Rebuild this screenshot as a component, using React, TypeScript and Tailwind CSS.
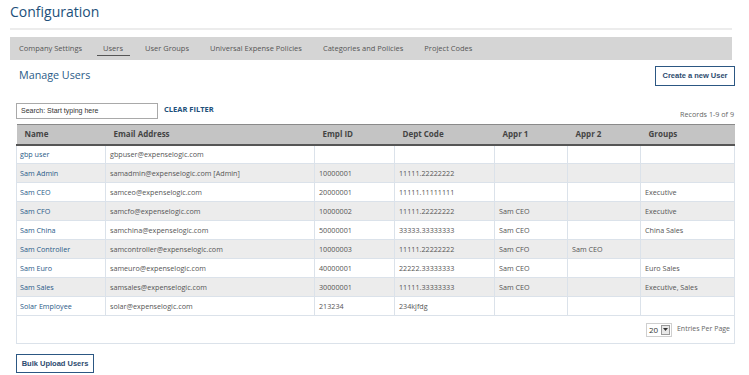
import React from "react";

const rows = [
  ["gbp user", "gbpuser@expenselogic.com", "", "", "", "", ""],
  ["Sam Admin", "samadmin@expenselogic.com [Admin]", "10000001", "11111.22222222", "", "", ""],
  ["Sam CEO", "samceo@expenselogic.com", "20000001", "11111.11111111", "", "", "Executive"],
  ["Sam CFO", "samcfo@expenselogic.com", "10000002", "11111.22222222", "Sam CEO", "", "Executive"],
  ["Sam China", "samchina@expenselogic.com", "50000001", "33333.33333333", "Sam CEO", "", "China Sales"],
  ["Sam Controller", "samcontroller@expenselogic.com", "10000003", "11111.22222222", "Sam CFO", "Sam CEO", ""],
  ["Sam Euro", "sameuro@expenselogic.com", "40000001", "22222.33333333", "Sam CEO", "", "Euro Sales"],
  ["Sam Sales", "samsales@expenselogic.com", "30000001", "11111.33333333", "Sam CEO", "", "Executive, Sales"],
  ["Solar Employee", "solar@expenselogic.com", "213234", "234kjfdg", "", "", ""],
];

const widths = ["w-[89px]", "w-[209px]", "w-[80px]", "w-[100px]", "w-[73px]", "w-[73px]", "w-[94px]"];
const headers = ["Name", "Email Address", "Empl ID", "Dept Code", "Appr 1", "Appr 2", "Groups"];

export default function App() {
  return (
    <div className="w-[749px] h-[375px] bg-white overflow-hidden font-['Open_Sans',sans-serif]">
      <div className="pl-[10px] pr-[17px]">
        <h1 className="text-[14px] leading-[22px] pt-[1px] text-[#21507a]">Configuration</h1>
        <div className="mt-[5px] h-[2px] bg-[#ececec]" />
        <div className="mt-[7px] h-[23px] bg-[#d5d5d5] flex items-center text-[7.5px] text-[#555]">
          <span className="ml-[9px]">Company Settings</span>
          <span className="ml-[21px] relative">
            Users
            <span className="absolute left-[-6px] right-[-7px] top-[12px] h-[1.5px] bg-[#555]" />
          </span>
          <span className="ml-[22px]">User Groups</span>
          <span className="ml-[21px]">Universal Expense Policies</span>
          <span className="ml-[21px]">Categories and Policies</span>
          <span className="ml-[21px]">Project Codes</span>
        </div>
      </div>

      <div className="px-[15px]">
        <div className="flex justify-between items-start mt-[6px]">
          <div className="ml-[4px] text-[10.75px] text-[#2a5b88] leading-[16px] pt-[1px]">Manage Users</div>
          <button className="mr-[-1px] w-[80px] h-[20px] border border-[#2c5783] bg-white text-[7.5px] font-bold text-[#2c4a6e] font-['Liberation_Sans',Arial,sans-serif]">
            Create a new User
          </button>
        </div>

        <div className="flex items-start mt-[17px]">
          <div className="ml-[1px] w-[142px] h-[16px] border border-[#a9a9a9] text-[7px] leading-[14px] pl-[4px] text-[#333] font-['Liberation_Sans',Arial,sans-serif]">
            Search: Start typing here
          </div>
          <div className="ml-[6px] mt-[1px] text-[7.5px] font-bold text-[#21507a] leading-[10px]">CLEAR FILTER</div>
          <div className="ml-auto mt-[6px] text-[7.2px] text-[#666] leading-[10px]">Records 1-9 of 9</div>
        </div>

        <div className="mt-[5px] ml-[1px] w-[719px]">
          <table className="w-[719px] table-fixed border-collapse">
            <thead>
              <tr className="bg-[#c4c4c4] h-[20px] border-t border-t-[#8a8a8a] border-b-2 border-b-[#555]">
                {headers.map((h, i) => (
                  <th key={h} className={`${widths[i]} text-left font-bold text-[8px] text-[#444] pl-[8px]`}>
                    {h}
                  </th>
                ))}
              </tr>
            </thead>
            <tbody>
              {rows.map((r, ri) => (
                <tr key={ri} className={`h-[19px] ${ri % 2 === 1 ? "bg-[#ececec]" : "bg-white"}`}>
                  {r.map((c, ci) => (
                    <td
                      key={ci}
                      className={`border border-[#dbe2ea] text-[7.2px] leading-[10px] ${ci === 0 ? "pl-[3px] text-[#2a5b88]" : "pl-[4px] text-[#555]"}`}
                    >
                      {c}
                    </td>
                  ))}
                </tr>
              ))}
            </tbody>
          </table>
          <div className="h-[28px] border border-t-0 border-[#dbe2ea] flex items-center justify-end pr-[4px]">
            <div className="flex items-center h-[14px] w-[26px] border border-[#cfcfcf] bg-white">
              <span className="text-[8px] text-[#333] pl-[2px] leading-[10px] flex-1">20</span>
              <span className="w-[9px] h-[10px] mr-[1px] border border-[#9a9a9a] bg-[#e8e8e8] flex items-center justify-center">
                <svg width="5" height="3" viewBox="0 0 5 3"><path d="M0 0 L5 0 L2.5 3 Z" fill="#333" /></svg>
              </span>
            </div>
            <span className="ml-[5px] text-[7px] text-[#666]">Entries Per Page</span>
          </div>
        </div>

        <button className="mt-[10px] ml-[1px] w-[78px] h-[19px] border border-[#2c5783] bg-white text-[7.5px] font-bold text-[#2c4a6e] font-['Liberation_Sans',Arial,sans-serif]">
          Bulk Upload Users
        </button>
      </div>
    </div>
  );
}
